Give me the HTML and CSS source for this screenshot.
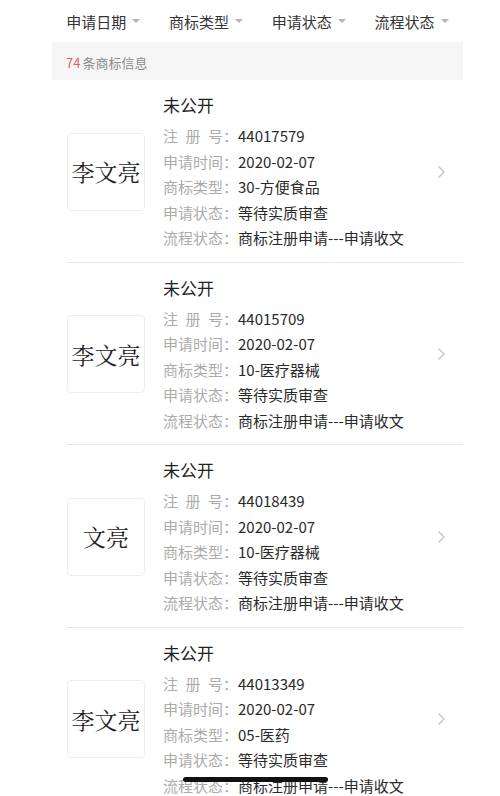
FILE: index.html
```html
<!DOCTYPE html>
<html lang="zh-CN">
<head>
    <meta charset="UTF-8">
    <meta name="viewport" content="width=device-width, initial-scale=1.0">
    <title>商标信息</title>
    <link rel="stylesheet" href="styles.css">
</head>
<body>

<div class="page">

  <div class="tabs">
    <div class="tab"><span>申请日期</span><i class="caret"></i></div>
    <div class="tab"><span>商标类型</span><i class="caret"></i></div>
    <div class="tab"><span>申请状态</span><i class="caret"></i></div>
    <div class="tab"><span>流程状态</span><i class="caret"></i></div>
  </div>

  <div class="count"><em>74</em>条商标信息</div>

  <ul class="list">
    <li class="item">
      <div class="logo">李文亮</div>
      <div class="info">
        <div class="name">未公开</div>
        <div class="rows">
          <p><label>注册号</label>：<span>44017579</span></p>
          <p><label>申请时间</label>：<span>2020-02-07</span></p>
          <p><label>商标类型</label>：<span>30-方便食品</span></p>
          <p><label>申请状态</label>：<span>等待实质审查</span></p>
          <p><label>流程状态</label>：<span>商标注册申请---申请收文</span></p>
        </div>
      </div>
      <svg class="arrow" width="9" height="14" viewBox="0 0 9 14"><polyline points="1.5,1.5 7,7 1.5,12.5" fill="none" stroke="#c4c4c4" stroke-width="1.4"/></svg>
    </li>

    <li class="item">
      <div class="logo">李文亮</div>
      <div class="info">
        <div class="name">未公开</div>
        <div class="rows">
          <p><label>注册号</label>：<span>44015709</span></p>
          <p><label>申请时间</label>：<span>2020-02-07</span></p>
          <p><label>商标类型</label>：<span>10-医疗器械</span></p>
          <p><label>申请状态</label>：<span>等待实质审查</span></p>
          <p><label>流程状态</label>：<span>商标注册申请---申请收文</span></p>
        </div>
      </div>
      <svg class="arrow" width="9" height="14" viewBox="0 0 9 14"><polyline points="1.5,1.5 7,7 1.5,12.5" fill="none" stroke="#c4c4c4" stroke-width="1.4"/></svg>
    </li>

    <li class="item">
      <div class="logo">文亮</div>
      <div class="info">
        <div class="name">未公开</div>
        <div class="rows">
          <p><label>注册号</label>：<span>44018439</span></p>
          <p><label>申请时间</label>：<span>2020-02-07</span></p>
          <p><label>商标类型</label>：<span>10-医疗器械</span></p>
          <p><label>申请状态</label>：<span>等待实质审查</span></p>
          <p><label>流程状态</label>：<span>商标注册申请---申请收文</span></p>
        </div>
      </div>
      <svg class="arrow" width="9" height="14" viewBox="0 0 9 14"><polyline points="1.5,1.5 7,7 1.5,12.5" fill="none" stroke="#c4c4c4" stroke-width="1.4"/></svg>
    </li>

    <li class="item">
      <div class="logo">李文亮</div>
      <div class="info">
        <div class="name">未公开</div>
        <div class="rows">
          <p><label>注册号</label>：<span>44013349</span></p>
          <p><label>申请时间</label>：<span>2020-02-07</span></p>
          <p><label>商标类型</label>：<span>05-医药</span></p>
          <p><label>申请状态</label>：<span>等待实质审查</span></p>
          <p><label>流程状态</label>：<span>商标注册申请---申请收文</span></p>
        </div>
      </div>
      <svg class="arrow" width="9" height="14" viewBox="0 0 9 14"><polyline points="1.5,1.5 7,7 1.5,12.5" fill="none" stroke="#c4c4c4" stroke-width="1.4"/></svg>
    </li>
  </ul>

</div>

<div class="home-bar"></div>

</body>
</html>
```

FILE: styles.css
```css
html, body {
    margin: 0;
    padding: 0;
    background: #fff;
    height: 796px;
    overflow: hidden;
}

body {
    font-family: "Noto Sans CJK SC", "Noto Sans", sans-serif;
    color: #333;
}

.page {
    margin-left: 52px;
    width: 411px;
}

/* filter tabs */
.tabs {
    display: flex;
    height: 42px;
}

.tab {
    flex: 1;
    display: flex;
    align-items: center;
    justify-content: center;
    font-size: 15px;
    color: #333;
}

.caret {
    width: 0;
    height: 0;
    margin-left: 6px;
    border-left: 4px solid transparent;
    border-right: 4px solid transparent;
    border-top: 4px solid #b5b5b5;
}

.count {
    height: 38px;
    line-height: 41px;
    background: #f5f5f5;
    padding-left: 14px;
    font-size: 13px;
    color: #8c8c8c;
}

.count em {
    font-style: normal;
    color: #e2605c;
    margin-right: 2px;
}

/* result list */
.list {
    list-style: none;
    margin: 0 0 0 15px;
    padding: 0;
}

.item {
    display: flex;
    align-items: center;
    padding: 13px 17px 11px 0;
    border-bottom: 1px solid #e6e6e6;
}

.logo {
    width: 76px;
    height: 76px;
    flex: none;
    border: 1px solid #eeeeee;
    border-radius: 4px;
    display: flex;
    align-items: center;
    justify-content: center;
    font-family: "Noto Serif CJK SC", "AR PL UMing CN", "Noto Sans CJK SC", serif;
    font-size: 23px;
    color: #1e1e1e;
}

.info {
    flex: 1;
    margin-left: 18px;
}

.name {
    font-size: 17px;
    line-height: 24px;
    color: #222;
}

.rows {
    margin-top: 6px;
}

.rows p {
    margin: 0;
    font-size: 15px;
    line-height: 25.5px;
    color: #ababab;
    white-space: nowrap;
}

.rows label {
    display: inline-block;
    width: 60px;
    text-align: justify;
    text-align-last: justify;
    vertical-align: top;
}

.rows span {
    color: #2a2a2a;
}

.arrow {
    flex: none;
}

.home-bar {
    position: fixed;
    left: 183px;
    top: 777px;
    width: 145px;
    height: 5px;
    border-radius: 3px;
    background: #111;
}
```
